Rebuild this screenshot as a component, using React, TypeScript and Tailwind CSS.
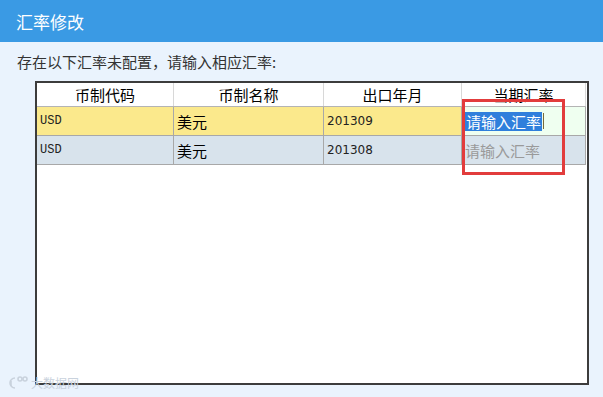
import React from 'react';

const cjk = { fontFamily: '"Noto Sans CJK SC", "Liberation Sans", sans-serif' };

const rows = [
  { code: 'USD', name: '美元', month: '201309', active: true },
  { code: 'USD', name: '美元', month: '201308', active: false },
];

export default function App() {
  return (
    <div className="relative w-[603px] h-[397px] overflow-hidden bg-[#eaf3fd] flex flex-col" style={cjk}>
      {/* title bar */}
      <div className="h-[42px] bg-[#3a9ae4] flex items-center pl-[16px] text-white text-[17px] leading-none">
        汇率修改
      </div>

      <div className="h-[39px] flex items-center pl-[17px] text-[15px] text-[#333] leading-none">
        存在以下汇率未配置，请输入相应汇率:
      </div>

      {/* grid */}
      <div className="ml-[35px] w-[554px] h-[304px] border-2 border-[#3c3c3c] bg-white">
        <div className="flex w-[549px] h-[24px] border-b border-[#b4b4b4] text-[15px] text-black leading-none">
          <div className="w-[137px] flex items-center justify-center border-r border-[#d8d8d8]">币制代码</div>
          <div className="w-[150px] flex items-center justify-center border-r border-[#d8d8d8]">币制名称</div>
          <div className="w-[138px] flex items-center justify-center border-r border-[#d8d8d8]">出口年月</div>
          <div className="w-[124px] flex items-center justify-center border-r border-[#d8d8d8]">当期汇率</div>
        </div>

        {rows.map((r, i) => (
          <div
            key={i}
            className={`flex w-[549px] h-[29px] border-b border-[#a8a8a8] leading-none ${r.active ? 'bg-[#fbe98c]' : 'bg-[#d8e3ec]'}`}
          >
            <div
              className="w-[137px] flex items-center pl-[3px] border-r border-[#a8a8a8] text-[12px] text-[#222]"
              style={{ fontFamily: '"Liberation Mono", monospace' }}
            >
              {r.code}
            </div>
            <div className="w-[150px] flex items-center pl-[3px] border-r border-[#a8a8a8] text-[15px] text-black">
              {r.name}
            </div>
            <div
              className="w-[138px] flex items-center pl-[3px] border-r border-[#a8a8a8] text-[12px] text-[#222]"
              style={{ fontFamily: '"DejaVu Sans", sans-serif' }}
            >
              {r.month}
            </div>
            <div
              className={`w-[124px] flex items-center pl-[3px] border-r border-[#a8a8a8] text-[15px] ${r.active ? 'bg-[#effff0]' : ''}`}
            >
              {r.active ? (
                <>
                  <span className="bg-[#2f7fdc] text-white px-[1px] py-[2px]">请输入汇率</span>
                  <span className="ml-[1px] w-[1px] h-[16px] bg-[#7a6a3a]" />
                </>
              ) : (
                <span className="text-[#9a9a9a]">请输入汇率</span>
              )}
            </div>
          </div>
        ))}
      </div>

      {/* red highlight box */}
      <div className="absolute left-[462px] top-[99px] w-[103px] h-[76px] border-[3px] border-[#e23c3c]" />

      {/* watermark */}
      <div className="absolute left-[7px] top-[376px] flex items-center gap-[2px] text-[12px] text-[#c9d2dd] leading-none">
        <svg width="22" height="14" viewBox="0 0 22 14" fill="none" stroke="#c9d2dd" strokeWidth="1.6">
          <path d="M8 2 A5 5 0 1 0 8 12" />
          <path d="M4 5 L4 10" />
          <circle cx="13" cy="3" r="2" />
          <circle cx="18" cy="3" r="2" />
        </svg>
        <span>大数据网</span>
      </div>
    </div>
  );
}
